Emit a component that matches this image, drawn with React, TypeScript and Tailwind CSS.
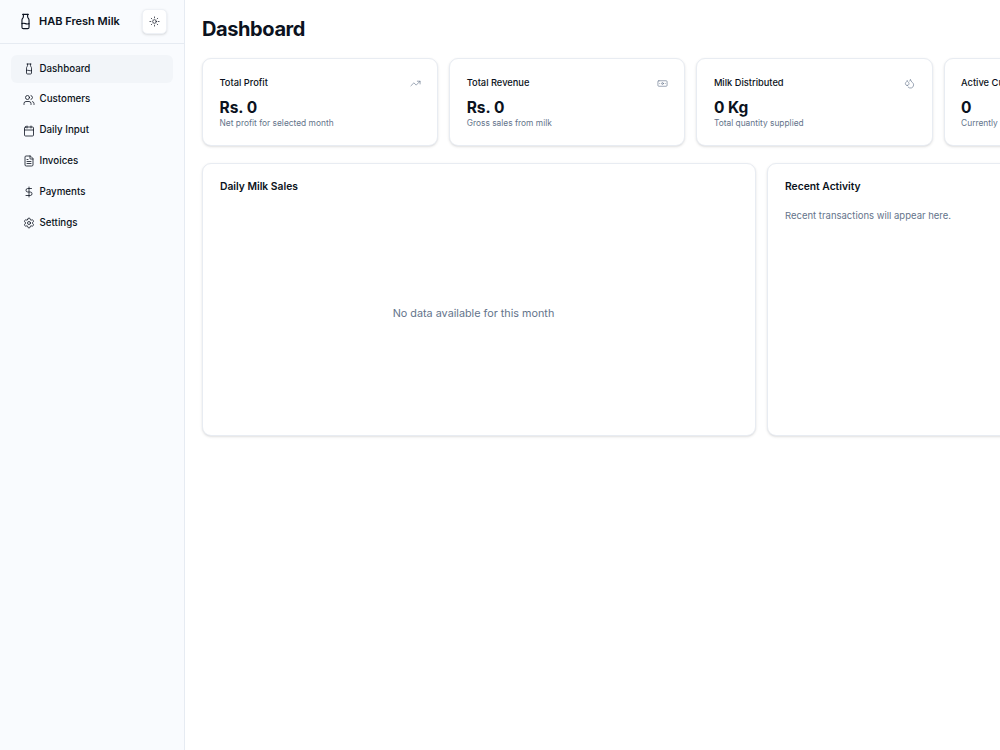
import React from 'react';
import { Milk, Users, Calendar, FileText, DollarSign, Settings, Sun, TrendingUp, Banknote, Droplets, Activity } from 'lucide-react';

const navItems = [
  { label: 'Dashboard', icon: Milk, active: true },
  { label: 'Customers', icon: Users },
  { label: 'Daily Input', icon: Calendar },
  { label: 'Invoices', icon: FileText },
  { label: 'Payments', icon: DollarSign },
  { label: 'Settings', icon: Settings },
];

const stats = [
  { title: 'Total Profit', value: 'Rs. 0', note: 'Net profit for selected month', icon: TrendingUp },
  { title: 'Total Revenue', value: 'Rs. 0', note: 'Gross sales from milk', icon: Banknote },
  { title: 'Milk Distributed', value: '0 Kg', note: 'Total quantity supplied', icon: Droplets },
  { title: 'Active Customers', value: '0', note: 'Currently active customers', icon: Activity },
];

export default function App() {
  return (
    <div className="flex h-[750px] w-[1000px] overflow-hidden bg-white text-[#0b1220] font-['Inter',sans-serif]">
      <aside className="w-[185px] shrink-0 border-r border-[#e6ebf2] bg-[#f9fbfe]">
        <div className="flex h-[44px] items-center justify-between border-b border-[#e6ebf2] pl-[17px] pr-[17px]">
          <div className="flex items-center gap-[5px]">
            <Milk size={17} strokeWidth={1.6} />
            <span className="text-[11px] font-semibold">HAB Fresh Milk</span>
          </div>
          <button className="flex h-[25px] w-[25px] items-center justify-center rounded-[5px] border border-[#eef1f6] bg-white shadow-sm">
            <Sun size={11} strokeWidth={1.5} />
          </button>
        </div>
        <nav className="flex flex-col gap-[2.8px] px-[11px] py-[11px]">
          {navItems.map((item) => (
            <div
              key={item.label}
              className={`flex h-[28px] items-center gap-[5px] rounded-[6px] pl-[11.5px] text-[9.75px] font-medium ${
                item.active ? 'bg-[#f2f5f9]' : ''
              }`}
            >
              <item.icon size={12} strokeWidth={1.6} />
              {item.label}
            </div>
          ))}
        </nav>
      </aside>

      <main className="min-w-0 flex-1 overflow-hidden px-[17px] py-[17px]">
        <h1 className="text-[20px] leading-[24px] font-bold tracking-[-0.4px]">Dashboard</h1>

        <div className="mt-[17px] flex gap-[11px]">
          {stats.map((stat) => (
            <div
              key={stat.title}
              className="h-[88px] w-[236.2px] shrink-0 rounded-[9px] border border-[#e8ecf2] bg-white px-[16.5px] pt-[17px] shadow-sm"
            >
              <div className="flex items-center justify-between">
                <span className="text-[9.3px] leading-[14px] font-medium whitespace-nowrap">{stat.title}</span>
                <stat.icon size={11} strokeWidth={1.4} className="text-[#64748b]" />
              </div>
              <div className="mt-[8px] text-[15.5px] leading-[20px] font-bold">{stat.value}</div>
              <div className="text-[8.4px] leading-[11px] whitespace-nowrap text-[#64748b]">{stat.note}</div>
            </div>
          ))}
        </div>

        <div className="mt-[17px] flex gap-[11px]">
          <section className="flex h-[273px] w-[554px] shrink-0 flex-col rounded-[9px] border border-[#e8ecf2] bg-white px-[17px] pt-[16px] pb-[17px] shadow-sm">
            <h2 className="text-[10.3px] leading-[13px] font-semibold">Daily Milk Sales</h2>
            <div className="flex flex-1 items-center justify-center pt-[17px] pr-[11px] text-[10.8px] text-[#64748b]">
              No data available for this month
            </div>
          </section>
          <section className="h-[273px] w-[260px] shrink-0 rounded-[9px] border border-[#e8ecf2] bg-white px-[17px] pt-[16px] pb-[17px] shadow-sm">
            <h2 className="text-[10.3px] leading-[13px] font-semibold">Recent Activity</h2>
            <p className="mt-[16px] text-[9.5px] leading-[14px] text-[#64748b]">Recent transactions will appear here.</p>
          </section>
        </div>
      </main>
    </div>
  );
}
